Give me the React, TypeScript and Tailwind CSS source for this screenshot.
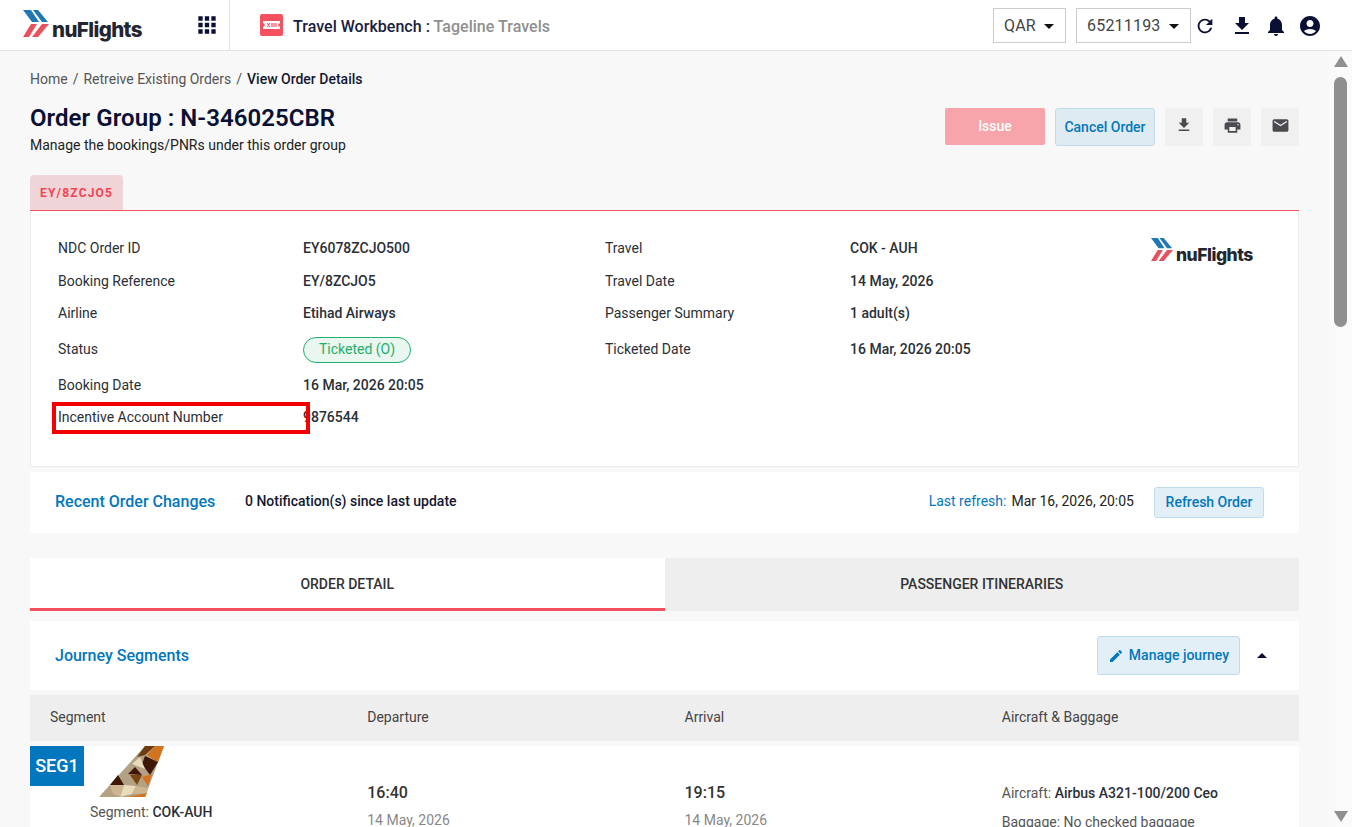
import type { FC, ReactNode } from 'react'
import {
  MdAccountCircle,
  MdApps,
  MdArrowDropDown,
  MdArrowDropUp,
  MdEdit,
  MdEmail,
  MdFileDownload,
  MdNotifications,
  MdPrint,
  MdRefresh,
} from 'react-icons/md'

const Logo: FC<{ small?: boolean }> = ({ small }) => (
  <div className={small ? 'flex items-end h-[26px] w-[102px]' : 'flex items-end h-[30px] w-[121px]'}>
    <svg
      viewBox="0 0 26 27"
      className={small ? 'w-[22px] h-[23px] shrink-0 mb-[3px]' : 'w-[26px] h-[27px] shrink-0 mb-[3px]'}
    >
      <polygon points="0,0 8,0 16,12 9,12" fill="#1f78b4" />
      <polygon points="10,0 15,0 25,12 19,12" fill="#1f78b4" />
      <polygon points="8,14 14,14 6,27 0,27" fill="#e8505b" />
      <polygon points="19,14 26,14 15,27 9,27" fill="#e8505b" />
    </svg>
    <span
      className={
        small
          ? "font-['Inter',sans-serif] font-extrabold text-[17.5px] leading-[20px] tracking-[-0.5px] text-[#23252f] ml-[3px] translate-y-[1px]"
          : "font-['Inter',sans-serif] font-extrabold text-[20.5px] leading-[24px] tracking-[-0.6px] text-[#23252f] ml-[3px] translate-y-[2px]"
      }
    >
      nuFlights
    </span>
  </div>
)

const Ticket = () => (
  <svg viewBox="0 0 23 22" className="w-[23px] h-[22px]">
    <rect width="23" height="22" rx="2" fill="#f5515f" />
    <path d="M3 7h17v2.2a1.8 1.8 0 0 0 0 3.6V15H3v-2.2a1.8 1.8 0 0 0 0-3.6z" fill="#fff" />
    <path d="M7 9l3 4M10 9l-3 4M12 9v4M14 9v4M16 9v4" stroke="#f5515f" strokeWidth="1.2" />
  </svg>
)

const Tail = () => (
  <svg viewBox="0 0 75 60" className="w-[75px] h-[60px]">
    <polygon points="4,55 50,4 69,4 50,55" fill="#b3a184" />
    <polygon points="42,15 50,4 60,4 50,13" fill="#6e3b12" />
    <polygon points="52,13 60,4 69,4 63,20" fill="#d4731f" />
    <polygon points="50,14 63,20 55,33 47,22" fill="#3f1608" />
    <polygon points="37,22 45,15 50,27" fill="#e9dcbc" />
    <polygon points="15,43 23,33 29,43" fill="#3f1608" />
    <polygon points="33,32 40,25 47,33" fill="#3f1608" />
    <polygon points="35,33 47,33 42,43" fill="#7a4413" />
    <polygon points="47,35 57,32 53,44" fill="#d4731f" />
    <polygon points="29,43 41,44 37,52 25,55" fill="#e9dcbc" />
    <polygon points="15,43 29,43 25,55 18,52" fill="#cdb691" />
    <polygon points="33,55 52,51 50,55" fill="#d4731f" />
    <polygon points="41,44 53,46 52,51 37,52" fill="#cdb691" />
  </svg>
)

const Field: FC<{ label: string; children?: ReactNode; boxed?: boolean }> = ({
  label,
  children,
  boxed,
}) => (
  <>
    <div className="relative flex items-center text-[#2b2f36]">
      {label}
      {boxed && (
        <div className="absolute left-[-6px] top-[1px] w-[258px] h-[32px] border-[4px] border-[#f50000]" />
      )}
    </div>
    <div className="flex items-center font-medium text-[#2b2f36]">{children}</div>
  </>
)

const IconBtn: FC<{ children: ReactNode }> = ({ children }) => (
  <button className="flex items-center justify-center w-[38px] h-[38px] pb-[4px] bg-[#f0f0f0] rounded-[3px] text-[#4a4a4f]">
    {children}
  </button>
)

const Select: FC<{ label: string; w: string }> = ({ label, w }) => (
  <div className={`flex items-center gap-[1px] h-[35px] pl-[10px] border border-[#ccc] text-[16px] tracking-[0.2px] text-[#444] ${w}`}>
    <span>{label}</span>
    <MdArrowDropDown size={24} className="text-[#111]" />
  </div>
)

export default function App() {
  return (
    <div className="flex flex-col w-[1352px] h-[827px] overflow-hidden bg-white font-['Roboto',sans-serif] text-[14px]">
      <header className="flex items-stretch shrink-0 h-[51px] border-b border-[#e4e4e4] bg-white">
        <div className="flex items-center w-[230px] pl-[23px] pr-[9px] border-r border-[#e4e4e4] justify-between">
          <Logo />
          <MdApps size={26} className="text-[#0a1033]" />
        </div>
        <div className="flex items-center flex-1 pl-[30px]">
          <Ticket />
          <span className="ml-[10px] pt-[3px] text-[16px] tracking-[0.03px] font-medium text-[#1a2040]">
            Travel Workbench : <span className="text-[#8f8f8f]">Tageline Travels</span>
          </span>
        </div>
        <div className="flex items-center pr-[30px] pt-[1px]">
          <Select label="QAR" w="w-[73px]" />
          <div className="w-[10px]" />
          <Select label="65211193" w="w-[115px]" />
          <MdRefresh size={22} className="ml-[3px] text-[#0a1033]" />
          <MdFileDownload size={24} className="ml-[14px] text-[#0a1033]" />
          <MdNotifications size={24} className="ml-[10px] text-[#0a1033]" />
          <MdAccountCircle size={24} className="ml-[10px] text-[#0a1033]" />
        </div>
      </header>

      <div className="flex flex-1 min-h-0">
        <main className="flex-1 min-w-0 bg-[#f8f8f8] pl-[30px] pr-[30px] pt-[19px] overflow-hidden">
          <div className="flex items-center gap-[5px] h-[18px] text-[#555]">
            <span>Home</span>
            <span>/</span>
            <span>Retreive Existing Orders</span>
            <span>/</span>
            <span className="font-medium text-[#14182f]">View Order Details</span>
          </div>

          <div className="flex justify-between mt-[14px]">
            <div>
              <h1 className="text-[24px] leading-[32px] font-semibold tracking-[0.05px] text-[#0a1033]">
                Order Group : N-346025CBR
              </h1>
              <p className="mt-[1px] leading-[20px] text-[#222]">Manage the bookings/PNRs under this order group</p>
            </div>
            <div className="flex gap-[10px] pt-[6px]">
              <button className="w-[100px] h-[37px] rounded-[2px] bg-[#f7a4aa] text-white font-medium">Issue</button>
              <button className="w-[100px] h-[38px] rounded-[3px] bg-[#deebf3] border border-[#c0dcec] text-[#0277bd] font-medium">
                Cancel Order
              </button>
              <IconBtn>
                <MdFileDownload size={18} />
              </IconBtn>
              <IconBtn>
                <MdPrint size={19} />
              </IconBtn>
              <IconBtn>
                <MdEmail size={19} />
              </IconBtn>
            </div>
          </div>

          <div className="mt-[20px] flex border-b border-[#f5515f]">
            <div className="flex items-center h-[35px] px-[10px] rounded-t-[4px] bg-[#f0d5d8] text-[#f04452] text-[12px] font-bold tracking-[1.2px]">
              EY/8ZCJO5
            </div>
          </div>

          <section className="flex justify-between h-[256px] bg-white border border-t-0 border-[#ececec] pl-[27px] pr-[45px] pt-[21px]">
            <div className="grid grid-cols-[245px_302px_245px_200px] grid-rows-[32px_34px_31px_40px_32px_32px] h-[201px]">
              <Field label="NDC Order ID">EY6078ZCJO500</Field>
              <Field label="Travel">COK - AUH</Field>
              <Field label="Booking Reference">EY/8ZCJO5</Field>
              <Field label="Travel Date">14 May, 2026</Field>
              <Field label="Airline">Etihad Airways</Field>
              <Field label="Passenger Summary">1 adult(s)</Field>
              <Field label="Status">
                <span className="flex items-center justify-center w-[108px] h-[26px] mt-[1px] rounded-full border border-[#1fae6b] bg-[#e9f7f0] font-normal text-[#1fae6b]">
                  Ticketed (O)
                </span>
              </Field>
              <Field label="Ticketed Date">16 Mar, 2026 20:05</Field>
              <Field label="Booking Date">16 Mar, 2026 20:05</Field>
              <div />
              <div />
              <Field label="Incentive Account Number" boxed>
                9876544
              </Field>
              <div />
              <div />
            </div>
            <div className="pt-[6px]">
              <Logo small />
            </div>
          </section>

          <section className="flex items-center h-[61px] mt-[5px] bg-white pl-[25px] pr-[35px]">
            <span className="w-[190px] mb-[2px] text-[16px] font-medium text-[#0277bd]">Recent Order Changes</span>
            <span className="mb-[2px] font-medium text-[#14182f]">0 Notification(s) since last update</span>
            <span className="ml-auto mb-[2px] text-[#0277bd]">Last refresh:</span>
            <span className="ml-[5px] mb-[2px] text-[#222]">Mar 16, 2026, 20:05</span>
            <button className="ml-[20px] w-[110px] h-[31px] rounded-[3px] bg-[#e3eff7] border border-[#c0dcec] text-[#0277bd] font-medium">
              Refresh Order
            </button>
          </section>

          <div className="grid grid-cols-2 h-[53px] mt-[25px] font-medium text-[#333]">
            <div className="flex items-center justify-center pt-[3px] bg-white border-b-[3px] border-[#f5515f]">ORDER DETAIL</div>
            <div className="flex items-center justify-center bg-[#eeeeee]">PASSENGER ITINERARIES</div>
          </div>

          <section className="flex items-center h-[69px] mt-[10px] bg-white pl-[25px] pr-[25px]">
            <span className="text-[16px] font-medium text-[#0277bd]">Journey Segments</span>
            <button className="ml-auto flex items-center justify-center gap-[5px] w-[143px] h-[39px] rounded-[3px] bg-[#e3eff7] border border-[#c0dcec] text-[#0277bd] font-medium">
              <MdEdit size={16} />
              Manage journey
            </button>
            <MdArrowDropUp size={24} className="ml-[10px] text-[#0a1033]" />
          </section>

          <div className="grid grid-cols-4 items-center h-[46px] mt-[5px] pb-[1px] bg-[#eeeeee] text-[#444]">
            <span className="pl-[20px]">Segment</span>
            <span className="pl-[20px]">Departure</span>
            <span className="pl-[20px]">Arrival</span>
            <span className="pl-[20px]">Aircraft &amp; Baggage</span>
          </div>

          <div className="relative grid grid-cols-4 h-[100px] mt-[5px] bg-white">
            <div className="absolute left-0 top-0 flex items-center justify-center w-[54px] h-[40px] pb-[1px] bg-[#0277bd] text-white text-[18px] font-medium">
              SEG1
            </div>
            <div className="absolute left-[65px] top-[-4px]">
              <Tail />
            </div>
            <div className="pt-[56px] pl-[60px] text-[#555]">
              Segment: <span className="font-medium text-[#2b2f36]">COK-AUH</span>
            </div>
            <div className="pt-[36px] pl-[20px]">
              <div className="text-[16px] leading-[22px] font-medium text-[#333]">16:40</div>
              <div className="mt-[6px] text-[#888]">14 May, 2026</div>
            </div>
            <div className="pt-[36px] pl-[20px]">
              <div className="text-[16px] leading-[22px] font-medium text-[#333]">19:15</div>
              <div className="mt-[6px] text-[#888]">14 May, 2026</div>
            </div>
            <div className="pt-[37px] pl-[20px] text-[#555]">
              <div>
                Aircraft: <span className="font-medium text-[#2b2f36]">Airbus A321-100/200 Ceo</span>
              </div>
              <div className="mt-[8px]">Baggage: No checked baggage</div>
            </div>
          </div>
        </main>

        <div className="flex flex-col items-center shrink-0 w-[23px] bg-[#fafafa]">
          <div className="mt-[5px] w-0 h-0 border-x-[7px] border-x-transparent border-b-[11px] border-b-[#8f8f8f]" />
          <div className="mt-[10px] w-[13px] h-[250px] rounded-full bg-[#8f8f8f]" />
          <div className="mt-auto mb-[5px] w-0 h-0 border-x-[7px] border-x-transparent border-t-[11px] border-t-[#8f8f8f]" />
        </div>
      </div>
    </div>
  )
}
